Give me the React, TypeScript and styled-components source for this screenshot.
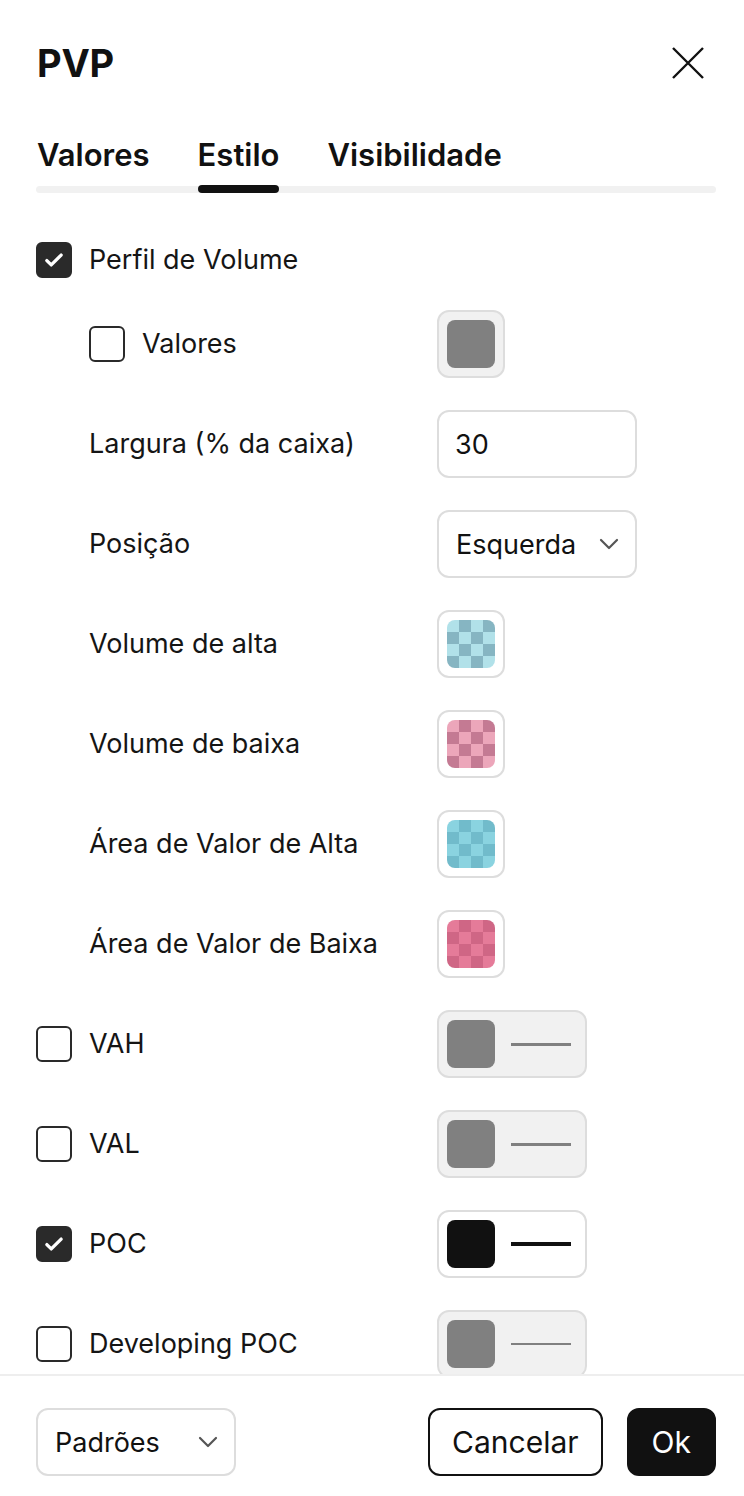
import React, { useState } from "react";
import styled, { createGlobalStyle } from "styled-components";

const GlobalStyle = createGlobalStyle`
  html, body {
    margin: 0;
    padding: 0;
    background: #ffffff;
  }
  body {
    font-family: Inter, "Noto Sans", "Liberation Sans", sans-serif;
    color: #111111;
  }
  * {
    box-sizing: border-box;
  }
`;

const Dialog = styled.div`
  display: flex;
  flex-direction: column;
  width: 744px;
  height: 1496px;
  background: #ffffff;
`;

const Header = styled.header`
  display: flex;
  justify-content: space-between;
  align-items: center;
  padding: 41px 40px 0 37px;
`;

const Title = styled.h1`
  margin: 0;
  font-size: 38px;
  line-height: 44px;
  font-weight: 700;
  letter-spacing: -0.2px;
`;

const CloseButton = styled.button`
  display: flex;
  width: 32px;
  height: 32px;
  padding: 0;
  border: none;
  background: none;
  cursor: pointer;
`;

const TabBar = styled.nav`
  position: relative;
  display: flex;
  gap: 48px;
  margin: 52px 28px 0 36px;
  padding-left: 1px;
  &::after {
    content: "";
    position: absolute;
    left: 0;
    right: 0;
    bottom: 0;
    height: 7px;
    border-radius: 4px;
    background: #f1f1f1;
  }
`;

const Tab = styled.button<{ $active?: boolean }>`
  position: relative;
  padding: 0 0 20px;
  border: none;
  background: none;
  font-family: inherit;
  font-size: 31px;
  line-height: 36px;
  font-weight: 600;
  color: #111111;
  cursor: pointer;
  &::after {
    content: "";
    display: ${(p) => (p.$active ? "block" : "none")};
    position: absolute;
    left: 0;
    right: 0;
    bottom: 0;
    height: 8px;
    border-radius: 4px;
    background: #111111;
    z-index: 1;
  }
`;

const Scroll = styled.div`
  flex: 1;
  min-height: 0;
  overflow-y: auto;
  scrollbar-width: none;
  &::-webkit-scrollbar {
    display: none;
  }
`;

const Form = styled.div`
  display: flex;
  flex-direction: column;
  gap: 32px;
  padding: 49px 28px 40px 36px;
`;

const Row = styled.div`
  display: grid;
  grid-template-columns: 401px auto;
  align-items: center;
`;

const LabelCell = styled.label<{ $indent?: boolean }>`
  display: flex;
  align-items: center;
  gap: 17px;
  padding-left: ${(p) => (p.$indent ? "53px" : "0")};
  font-size: 27px;
  line-height: 32px;
  color: #151515;
  cursor: pointer;
`;

const Box = styled.span<{ $checked?: boolean }>`
  display: flex;
  align-items: center;
  justify-content: center;
  flex-shrink: 0;
  width: 36px;
  height: 36px;
  border-radius: 6px;
  border: 2px solid #2a2a2a;
  background: ${(p) => (p.$checked ? "#2a2a2a" : "#ffffff")};
`;

const ControlButton = styled.button<{ $muted?: boolean }>`
  display: flex;
  align-items: center;
  gap: 16px;
  height: 68px;
  padding: 0 8px;
  border: 2px solid #dddddd;
  border-radius: 12px;
  background: ${(p) => (p.$muted ? "#f1f1f1" : "#ffffff")};
  cursor: pointer;
`;

const Swatch = styled.span<{ $color: string }>`
  display: block;
  width: 48px;
  height: 48px;
  border-radius: 8px;
  background: ${(p) => p.$color};
`;

const Checker = styled.span<{ $light: string; $dark: string }>`
  display: block;
  width: 48px;
  height: 48px;
  border-radius: 8px;
  background-color: ${(p) => p.$light};
  background-image: linear-gradient(45deg, ${(p) => p.$dark} 25%, transparent 25%, transparent 75%, ${(p) => p.$dark} 75%),
    linear-gradient(45deg, ${(p) => p.$dark} 25%, transparent 25%, transparent 75%, ${(p) => p.$dark} 75%);
  background-size: 24px 24px;
  background-position: 0 0, 12px 12px;
`;

const StrokeLine = styled.span<{ $color: string; $width: number }>`
  display: block;
  width: 60px;
  height: ${(p) => p.$width}px;
  margin-right: 6px;
  background: ${(p) => p.$color};
`;

const TextInput = styled.input`
  width: 200px;
  height: 68px;
  padding: 0 16px;
  border: 2px solid #dddddd;
  border-radius: 12px;
  font-family: inherit;
  font-size: 27px;
  color: #111111;
  outline: none;
`;

const SelectBox = styled.button<{ $width: number }>`
  display: flex;
  align-items: center;
  justify-content: space-between;
  width: ${(p) => p.$width}px;
  height: 68px;
  padding: 0 16px 0 17px;
  border: 2px solid #dddddd;
  border-radius: 12px;
  background: #ffffff;
  font-family: inherit;
  font-size: 27px;
  color: #111111;
  cursor: pointer;
`;

const Footer = styled.footer`
  display: flex;
  align-items: center;
  gap: 24px;
  padding: 32px 28px 20px 36px;
  border-top: 2px solid #eeeeee;
`;

const Spacer = styled.div`
  flex: 1;
`;

const Button = styled.button<{ $primary?: boolean }>`
  height: 68px;
  padding: 0 ${(p) => (p.$primary ? "23px" : "22px")};
  border-radius: 12px;
  border: 2px solid #111111;
  background: ${(p) => (p.$primary ? "#111111" : "#ffffff")};
  color: ${(p) => (p.$primary ? "#ffffff" : "#111111")};
  font-family: inherit;
  font-size: 30px;
  cursor: pointer;
`;

function CheckIcon() {
  return (
    <svg width="22" height="22" viewBox="0 0 20 20" fill="none">
      <path d="M3.5 10.5l4 4 9-9" stroke="#fff" strokeWidth="3" strokeLinecap="round" strokeLinejoin="round" />
    </svg>
  );
}

function Chevron() {
  return (
    <svg width="20" height="12" viewBox="0 0 20 12" fill="none">
      <path d="M2 2l8 8 8-8" stroke="#555" strokeWidth="2.2" strokeLinecap="round" strokeLinejoin="round" />
    </svg>
  );
}

function Checkbox({ checked, onChange }: { checked: boolean; onChange: () => void }) {
  return (
    <Box $checked={checked} onClick={onChange} role="checkbox" aria-checked={checked}>
      {checked && <CheckIcon />}
    </Box>
  );
}

const areas = [
  { label: "Volume de alta", light: "#b1e1e9", dark: "#86b5c2" },
  { label: "Volume de baixa", light: "#eca6ba", dark: "#c47a93" },
  { label: "Área de Valor de Alta", light: "#8ad3e0", dark: "#71bbcb" },
  { label: "Área de Valor de Baixa", light: "#e57b99", dark: "#cf6685" },
];

const lines = [
  { key: "vah", label: "VAH", color: "#808080", width: 3 },
  { key: "val", label: "VAL", color: "#808080", width: 3 },
  { key: "poc", label: "POC", color: "#111111", width: 4 },
  { key: "dpoc", label: "Developing POC", color: "#808080", width: 2 },
];

export default function App() {
  const [tab, setTab] = useState("Estilo");
  const [checks, setChecks] = useState<Record<string, boolean>>({
    profile: true,
    values: false,
    vah: false,
    val: false,
    poc: true,
    dpoc: false,
  });
  const [width, setWidth] = useState("30");

  const toggle = (k: string) => setChecks((s) => ({ ...s, [k]: !s[k] }));

  return (
    <Dialog>
      <GlobalStyle />
      <Header>
        <Title>PVP</Title>
        <CloseButton aria-label="Fechar">
          <svg width="32" height="32" viewBox="0 0 32 32" fill="none">
            <path d="M1 1l30 30M31 1L1 31" stroke="#111" strokeWidth="2.4" />
          </svg>
        </CloseButton>
      </Header>

      <TabBar>
        {["Valores", "Estilo", "Visibilidade"].map((t) => (
          <Tab key={t} $active={tab === t} onClick={() => setTab(t)}>
            {t}
          </Tab>
        ))}
      </TabBar>

      <Scroll>
        <Form>
          <Row>
            <LabelCell>
              <Checkbox checked={checks.profile} onChange={() => toggle("profile")} />
              Perfil de Volume
            </LabelCell>
          </Row>

          <Row>
            <LabelCell $indent>
              <Checkbox checked={checks.values} onChange={() => toggle("values")} />
              Valores
            </LabelCell>
            <div>
              <ControlButton $muted={!checks.values}>
                <Swatch $color="#808080" />
              </ControlButton>
            </div>
          </Row>

          <Row>
            <LabelCell $indent>Largura (% da caixa)</LabelCell>
            <div>
              <TextInput value={width} onChange={(e) => setWidth(e.target.value)} />
            </div>
          </Row>

          <Row>
            <LabelCell $indent>Posição</LabelCell>
            <div>
              <SelectBox $width={200}>
                Esquerda
                <Chevron />
              </SelectBox>
            </div>
          </Row>

          {areas.map((a) => (
            <Row key={a.label}>
              <LabelCell $indent>{a.label}</LabelCell>
              <div>
                <ControlButton>
                  <Checker $light={a.light} $dark={a.dark} />
                </ControlButton>
              </div>
            </Row>
          ))}

          {lines.map((l) => (
            <Row key={l.key}>
              <LabelCell>
                <Checkbox checked={checks[l.key]} onChange={() => toggle(l.key)} />
                {l.label}
              </LabelCell>
              <div>
                <ControlButton $muted={!checks[l.key]}>
                  <Swatch $color={checks[l.key] ? "#111111" : "#808080"} />
                  <StrokeLine $color={l.color} $width={l.width} />
                </ControlButton>
              </div>
            </Row>
          ))}
        </Form>
      </Scroll>

      <Footer>
        <SelectBox $width={200}>
          Padrões
          <Chevron />
        </SelectBox>
        <Spacer />
        <Button>Cancelar</Button>
        <Button $primary>Ok</Button>
      </Footer>
    </Dialog>
  );
}
